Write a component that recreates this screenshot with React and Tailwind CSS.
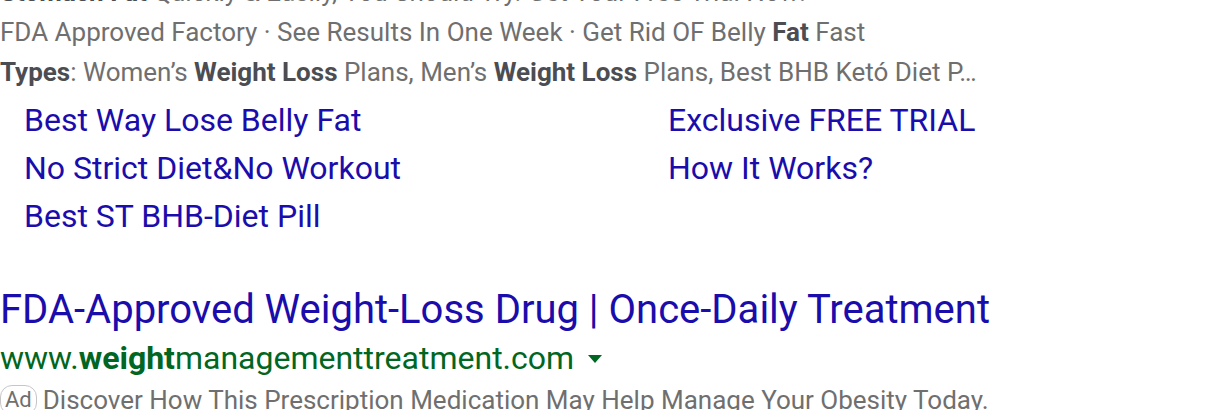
const sitelinksLeft = ['Best Way Lose Belly Fat', 'No Strict Diet&No Workout', 'Best ST BHB-Diet Pill'];
const sitelinksRight = ['Exclusive FREE TRIAL', 'How It Works?'];

export default function App() {
  return (
    <div
      className="w-[1216px] h-[410px] overflow-hidden bg-white"
      style={{ fontFamily: 'Roboto, "Noto Sans", Arial, sans-serif' }}
    >
      <div className="-mt-[28px]">
        {/* description lines */}
        <div className="text-[26px] leading-[40px] text-[#6f6f6f] whitespace-nowrap">
          <div>
            <b className="font-bold text-[#4b4d52]">Stomach Fat</b> Quickly &amp; Easily, You Should Try. Get Your Free Trial Now!
          </div>
          <div>
            FDA Approved Factory · See Results In One Week · Get Rid OF Belly <b className="font-bold text-[#4b4d52]">Fat</b> Fast
          </div>
          <div>
            <b className="font-bold text-[#4b4d52]">Types</b>: Women’s <b className="font-bold text-[#4b4d52]">Weight Loss</b> Plans, Men’s{' '}
            <b className="font-bold text-[#4b4d52]">Weight Loss</b> Plans, Best BHB Ketó Diet P…
          </div>
        </div>

        {/* sitelinks */}
        <div className="grid grid-cols-[644px_1fr] pl-[24px] pt-[4px] text-[32px] leading-[48px] text-[#1a0dab]">
          <div className="flex flex-col">
            {sitelinksLeft.map((s) => (
              <a key={s} className="whitespace-nowrap">{s}</a>
            ))}
          </div>
          <div className="flex flex-col">
            {sitelinksRight.map((s) => (
              <a key={s} className="whitespace-nowrap">{s}</a>
            ))}
          </div>
        </div>

        {/* next ad */}
        <div className="mt-[46px]">
          <div className="text-[40px] leading-[48px] text-[#1a0dab] whitespace-nowrap">
            FDA-Approved Weight-Loss Drug | Once-Daily Treatment
          </div>
          <div className="flex items-center text-[32px] leading-[48px] text-[#006621] whitespace-nowrap">
            <span>
              www.<b className="font-bold">weight</b>managementtreatment.com
            </span>
            <svg className="ml-[14px] mt-[2px]" width="14" height="8" viewBox="0 0 14 8">
              <path d="M0 0h14L7 8z" fill="#006621" />
            </svg>
          </div>
          <div className="flex items-center text-[26px] leading-[36px] text-[#6f6f6f] whitespace-nowrap">
            <span className="mr-[6px] rounded-[12px] border border-[#c6c6c6] px-[4px] text-[22px] leading-[28px]">Ad</span>
            Discover How This Prescription Medication May Help Manage Your Obesity Today.
          </div>
        </div>
      </div>
    </div>
  );
}
